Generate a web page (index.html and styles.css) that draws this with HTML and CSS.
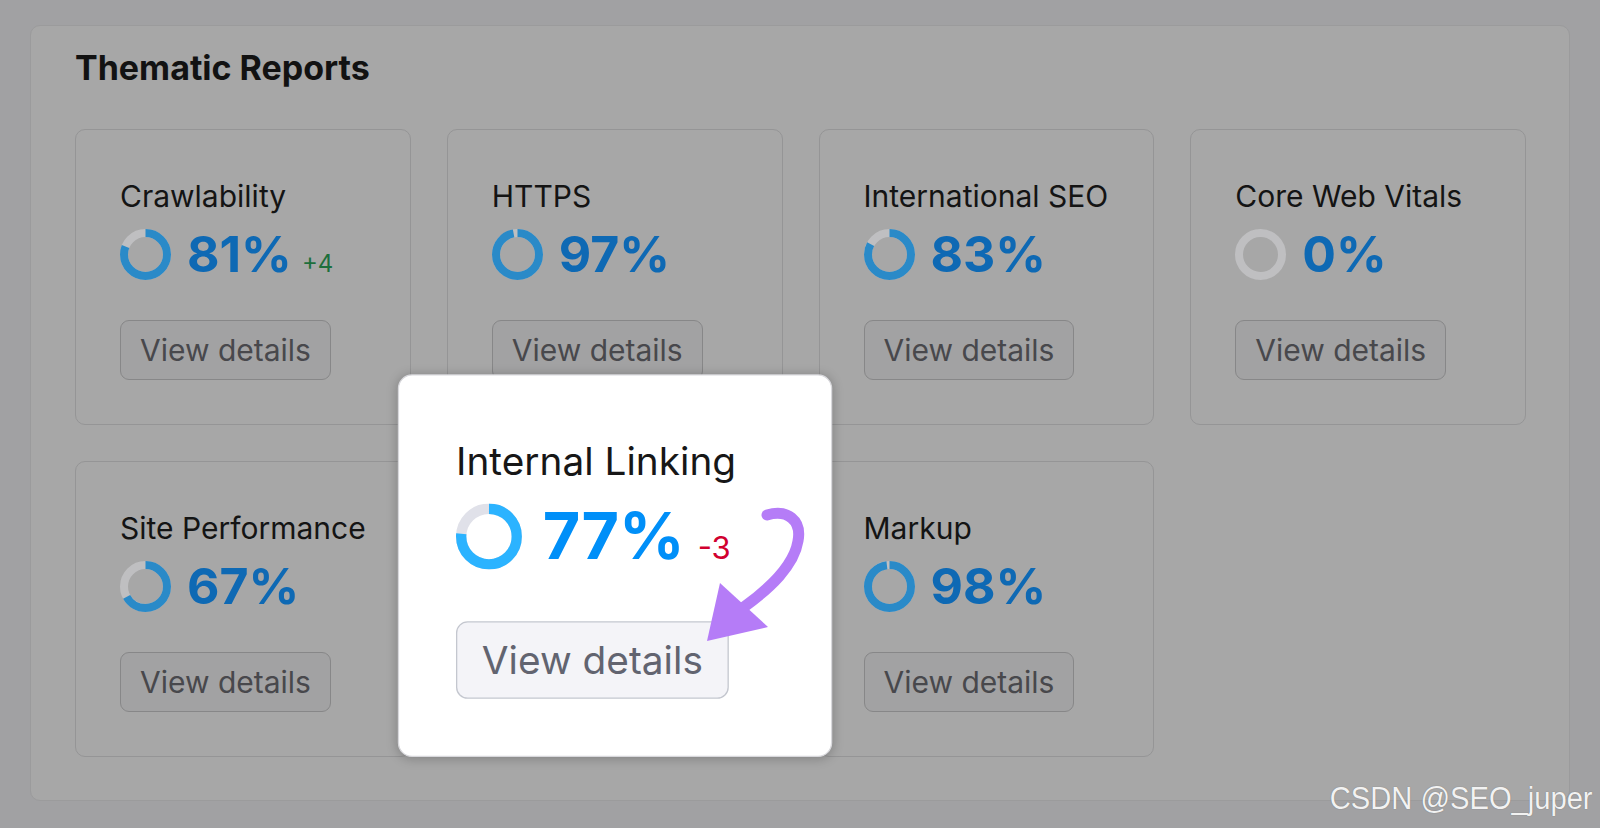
FILE: index.html
```html
<!DOCTYPE html>
<html lang="en">
<head>
	<meta charset="UTF-8">
	<title>Site Audit - Thematic Reports</title>
	<link rel="stylesheet" href="styles.css">
</head>
<body>
	<div class="panel">
		<h2>Thematic Reports</h2>
		<div class="reports">
			<div class="card">
				<div class="title">Crawlability</div>
				<div class="score">
					<svg class="donut" viewBox="0 0 51 51"><circle class="track" cx="25.5" cy="25.5" r="21.5"/><circle class="value" cx="25.5" cy="25.5" r="21.5" pathLength="100" stroke-dasharray="81 100" transform="rotate(-90 25.5 25.5)"/></svg>
					<span class="num"><span class="pct">81%</span><span class="delta up">+4</span></span>
				</div>
				<button class="details">View details</button>
			</div>
			<div class="card">
				<div class="title">HTTPS</div>
				<div class="score">
					<svg class="donut" viewBox="0 0 51 51"><circle class="track" cx="25.5" cy="25.5" r="21.5"/><circle class="value" cx="25.5" cy="25.5" r="21.5" pathLength="100" stroke-dasharray="97 100" transform="rotate(-90 25.5 25.5)"/></svg>
					<span class="num"><span class="pct">97%</span></span>
				</div>
				<button class="details">View details</button>
			</div>
			<div class="card">
				<div class="title">International SEO</div>
				<div class="score">
					<svg class="donut" viewBox="0 0 51 51"><circle class="track" cx="25.5" cy="25.5" r="21.5"/><circle class="value" cx="25.5" cy="25.5" r="21.5" pathLength="100" stroke-dasharray="83 100" transform="rotate(-90 25.5 25.5)"/></svg>
					<span class="num"><span class="pct">83%</span></span>
				</div>
				<button class="details">View details</button>
			</div>
			<div class="card">
				<div class="title">Core Web Vitals</div>
				<div class="score">
					<svg class="donut" viewBox="0 0 51 51"><circle class="track" cx="25.5" cy="25.5" r="21.5"/></svg>
					<span class="num"><span class="pct">0%</span></span>
				</div>
				<button class="details">View details</button>
			</div>
			<div class="card">
				<div class="title">Site Performance</div>
				<div class="score">
					<svg class="donut" viewBox="0 0 51 51"><circle class="track" cx="25.5" cy="25.5" r="21.5"/><circle class="value" cx="25.5" cy="25.5" r="21.5" pathLength="100" stroke-dasharray="67 100" transform="rotate(-90 25.5 25.5)"/></svg>
					<span class="num"><span class="pct">67%</span></span>
				</div>
				<button class="details">View details</button>
			</div>
			<div class="card focus">
				<div class="title">Internal Linking</div>
				<div class="score">
					<svg class="donut" viewBox="0 0 51 51"><circle class="track" cx="25.5" cy="25.5" r="21.5"/><circle class="value" cx="25.5" cy="25.5" r="21.5" pathLength="100" stroke-dasharray="77 100" transform="rotate(-90 25.5 25.5)"/></svg>
					<span class="num"><span class="pct">77%</span><span class="delta down">-3</span></span>
				</div>
				<button class="details">View details</button>
			</div>
			<div class="card">
				<div class="title">Markup</div>
				<div class="score">
					<svg class="donut" viewBox="0 0 51 51"><circle class="track" cx="25.5" cy="25.5" r="21.5"/><circle class="value" cx="25.5" cy="25.5" r="21.5" pathLength="100" stroke-dasharray="98 100" transform="rotate(-90 25.5 25.5)"/></svg>
					<span class="num"><span class="pct">98%</span></span>
				</div>
				<button class="details">View details</button>
			</div>
		</div>
	</div>

	<!-- annotation arrow pointing at the highlighted button -->
	<svg class="arrow" viewBox="0 0 1600 828">
		<path d="M767,515 C787,509 802,520 798,541 C794,566 770,588 744,607" />
		<polygon points="720,583 768,627 707,641" />
	</svg>

	<div class="watermark">CSDN @SEO_juper</div>
</body>
</html>
```

FILE: styles.css
```css
html, body {
	margin: 0;
	padding: 0;
}
body {
	height: 828px;
	box-sizing: border-box;
	padding-top: 25px;
	overflow: hidden;
	background: #a1a1a3;
	font-family: Inter, "Noto Sans", sans-serif;
}
.panel {
	height: 776px;
	box-sizing: border-box;
	margin: 0 30px 0 30px;
	padding: 22px 43px 0 44px;
	background: #a7a7a7;
	border: 1px solid #9b9b9c;
	border-radius: 10px;
}
.panel>h2 {
	margin: 0 0 41px 0;
	font-size: 34px;
	line-height: 40px;
	font-weight: 700;
	color: #121212;
}
.reports {
	display: grid;
	grid-template-columns: repeat(4, 1fr);
	gap: 36px;
	align-items: start;
}
.card {
	display: flex;
	flex-direction: column;
	align-items: flex-start;
	padding: 49px 44px 44px;
	background: #a7a7a7;
	border: 1px solid #959596;
	border-radius: 10px;
}
.title {
	font-size: 30px;
	line-height: 34px;
	color: #141414;
}
.score {
	display: flex;
	align-items: center;
	gap: 16px;
	margin-top: 10px;
}
.donut {
	width: 51px;
	height: 51px;
}
.donut circle {
	fill: none;
	stroke-width: 8;
}
.track {
	stroke: #bfbfc1;
}
.value {
	stroke: #2a8ac8;
}
.num {
	display: flex;
	align-items: baseline;
	gap: 10px;
}
.pct {
	font-size: 50px;
	line-height: 63px;
	font-weight: 700;
	color: #0e69b4;
}
.delta {
	font-size: 24px;
}
.up {
	color: #1d6f3c;
}
.down {
	color: #d1002f;
}
.details {
	margin-top: 34px;
	padding: 12px 19px;
	font-family: inherit;
	font-size: 30px;
	line-height: 34px;
	color: #48484c;
	background: #a2a2a3;
	border: 1px solid #878788;
	border-radius: 9px;
}

/* highlighted card, lifted above the dimmed dashboard */
.card.focus {
	position: relative;
	z-index: 2;
	background: #fff;
	border-color: #d8d8dc;
	border-radius: 11px;
	box-shadow: 0 1px 8px rgba(0,0,0,.22);
	transform: scale(1.293);
	transform-origin: 50% 100%;
}
.focus .title {
	color: #171717;
}
.focus .track {
	stroke: #e0e1e9;
}
.focus .value {
	stroke: #2bb3ff;
}
.focus .pct {
	color: #008ff8;
}
.focus .details {
	color: #626470;
	background: #f4f4f8;
	border-color: #c4c7cf;
}

.arrow {
	position: absolute;
	left: 0;
	top: 0;
	width: 1600px;
	height: 828px;
	z-index: 3;
	pointer-events: none;
}
.arrow path {
	fill: none;
	stroke: #b57cf7;
	stroke-width: 11;
	stroke-linecap: round;
}
.arrow polygon {
	fill: #b57cf7;
}
.watermark {
	position: absolute;
	right: 7px;
	top: 783px;
	z-index: 4;
	font-family: "Liberation Sans", Arial, sans-serif;
	font-size: 31px;
	line-height: 31px;
	color: #f2f2f2;
	text-shadow: 0 0 1px rgba(0,0,0,.4);
	transform: scaleX(0.94);
	transform-origin: right center;
}
```
